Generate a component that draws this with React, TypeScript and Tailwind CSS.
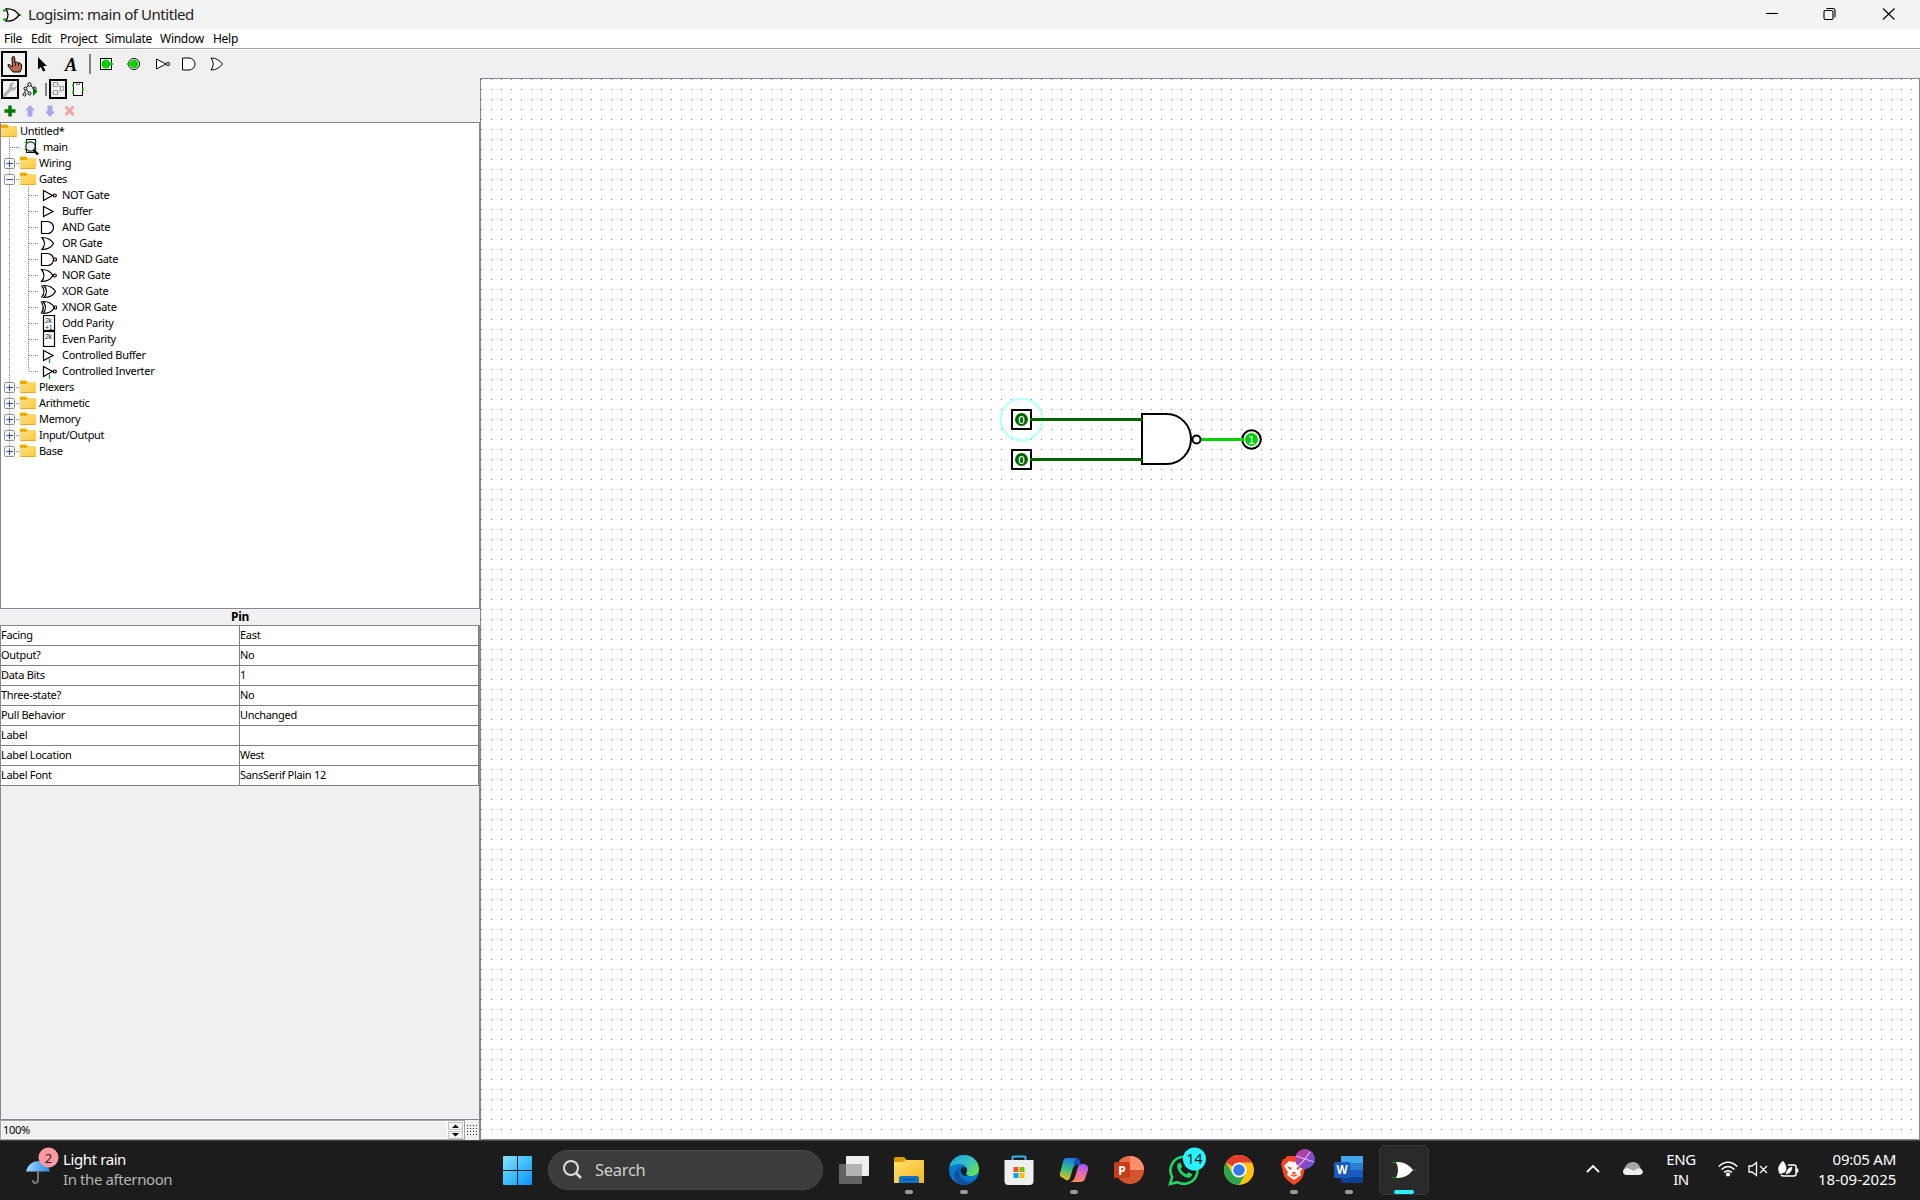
import type { ReactNode } from "react";

const ui = "font-['Noto_Sans','Open_Sans',sans-serif]";

type Shape = "not" | "buffer" | "and" | "or" | "nand" | "nor" | "xor" | "xnor" | "odd" | "even" | "cbuf" | "cinv";

function Gate({ shape }: { shape: Shape }) {
  const bubble = (x: number) => <circle cx={x} cy="8.5" r="1.5" />;
  const orBody = (x: number) => <path d={`M${x} 2.5 Q${x + 8} 2.5 ${x + 11.5} 8.5 Q${x + 8} 14.5 ${x} 14.5 Q${x + 5} 8.5 ${x} 2.5Z`} />;
  return (
    <svg width="18" height="16" viewBox="0 0 18 16" fill="none" stroke="#000" strokeWidth="1.2" className="shrink-0">
      {(shape === "not" || shape === "cinv") && <><path d="M4.5 3.5 V13.5 L13.5 8.5Z" />{bubble(15.8)}</>}
      {(shape === "buffer" || shape === "cbuf") && <path d="M4.5 3.5 V13.5 L14 8.5Z" />}
      {(shape === "cbuf" || shape === "cinv") && <path d="M10.5 11.5V16" stroke="#00a000" />}
      {(shape === "and" || shape === "nand") && <path d="M2.5 2.5 H8.5 A6 6 0 0 1 8.5 14.5 H2.5Z" />}
      {shape === "nand" && bubble(16)}
      {shape === "or" && orBody(3)}
      {shape === "nor" && <>{orBody(2.5)}{bubble(15.8)}</>}
      {shape === "xor" && <>{orBody(5)}<path d="M2.5 2.5Q7.5 8.5 2.5 14.5" /></>}
      {shape === "xnor" && <>{orBody(4)}<path d="M2 2.5Q6.5 8.5 2 14.5" />{bubble(16.3)}</>}
      {(shape === "odd" || shape === "even") && (
        <>
          <rect x="4.5" y=".5" width="11" height="15" />
          <text x="6" y="7.500" fontSize="7" stroke="none" fill="#222" fontFamily="Liberation Sans">2k</text>
          {shape === "odd" && <text x="6" y="14.500" fontSize="7" stroke="none" fill="#222" fontFamily="Liberation Sans">+1</text>}
        </>
      )}
    </svg>
  );
}

function Folder() {
  return (
    <svg width="16" height="16" viewBox="0 0 16 16" className="shrink-0">
      <path d="M0 2.5 Q0 1.5 1 1.5 H6 L8 3.5 V7 H0Z" fill="#f2a900" />
      <path d="M0 5 H6.5 L8.5 3 H15 Q16 3 16 4 V13 Q16 14 15 14 H1 Q0 14 0 13Z" fill="url(#folder)" />
      <path d="M.5 13.5H15.5" stroke="#e5a823" />
      <defs><linearGradient id="folder" x1="0" y1="0" x2="1" y2="1"><stop stopColor="#ffe08a" /><stop offset="1" stopColor="#fdc93c" /></linearGradient></defs>
    </svg>
  );
}

function MainIcon() {
  return (
    <svg width="19" height="16" viewBox="0 0 19 16" className="shrink-0" fill="none">
      <rect x="6.5" y=".5" width="9" height="13" stroke="#000" />
      <path d="M4.500 3.500h3M4.500 10.500h3M14.500 3.500h2M14.500 10.500h2" stroke="#00c800" strokeWidth="1.4" />
      <circle cx="10.500" cy="7.500" r="4.700" fill="#eef" stroke="#222" strokeWidth="1.200" />
      <path d="M13.500 11L18 15.500" stroke="#000" strokeWidth="2.400" />
    </svg>
  );
}

function Guide({ branch, last, box }: { branch?: boolean; last?: boolean; box?: "+" | "-" }) {
  return (
    <svg width="19" height="16" viewBox="0 0 19 16" className="shrink-0" fill="none">
      <path d={last ? "M8.5 0V8" : "M8.5 0V16"} stroke="#808080" strokeDasharray="1 1" />
      {branch && <path d="M9 8.5H19" stroke="#808080" strokeDasharray="1 1" />}
      {box && (
        <>
          <rect x="3.5" y="3.5" width="10" height="10" rx="1" fill="#f4f4f4" stroke="#919191" />
          <path d={box === "+" ? "M5.5 8.5H12M8.5 5.500V12" : "M5.5 8.5H12"} stroke="#3a50a0" />
        </>
      )}
    </svg>
  );
}

const gates: [string, Shape][] = [
  ["NOT Gate", "not"], ["Buffer", "buffer"], ["AND Gate", "and"], ["OR Gate", "or"],
  ["NAND Gate", "nand"], ["NOR Gate", "nor"], ["XOR Gate", "xor"], ["XNOR Gate", "xnor"],
  ["Odd Parity", "odd"], ["Even Parity", "even"], ["Controlled Buffer", "cbuf"], ["Controlled Inverter", "cinv"],
];

function Row({ children }: { children: ReactNode }) {
  return <div className="flex h-4 items-center whitespace-nowrap">{children}</div>;
}

function FolderRow({ name, box, last }: { name: string; box: "+" | "-"; last?: boolean }) {
  return <Row><Guide branch box={box} last={last} /><Folder /><span className="ml-[3px]">{name}</span></Row>;
}

function Tree() {
  return (
    <div className="h-[487px] border border-[#828790] bg-white text-[11px] leading-4 tracking-[-0.32px]">
      <Row><Folder /><span className="ml-[3px]">Untitled*</span></Row>
      <Row><Guide branch /><MainIcon /><span className="ml-[4px]">main</span></Row>
      <FolderRow name="Wiring" box="+" />
      <FolderRow name="Gates" box="-" />
      {gates.map(([name, shape], i) => (
        <Row key={name}>
          <Guide /><Guide branch last={i === gates.length - 1} /><Gate shape={shape} /><span className="ml-[5px]">{name}</span>
        </Row>
      ))}
      <FolderRow name="Plexers" box="+" />
      <FolderRow name="Arithmetic" box="+" />
      <FolderRow name="Memory" box="+" />
      <FolderRow name="Input/Output" box="+" />
      <FolderRow name="Base" box="+" last />
    </div>
  );
}

const attributes = [
  ["Facing", "East"], ["Output?", "No"], ["Data Bits", "1"], ["Three-state?", "No"], ["Pull Behavior", "Unchanged"],
  ["Label", ""], ["Label Location", "West"], ["Label Font", "SansSerif Plain 12"],
];

function Attributes() {
  return (
    <div className="flex flex-1 flex-col">
      <div className="flex h-4 items-center justify-center text-[12px] font-bold tracking-[-0.2px]">Pin</div>
      <div className="flex-1 border border-[#828790] text-[11px] tracking-[-0.3px]">
        {attributes.map(([k, v]) => (
          <div key={k} className="flex h-5 border-b border-r border-[#808080] bg-white leading-[18px]">
            <div className="w-[239px] border-r border-[#808080]">{k}</div>
            <div>{v}</div>
          </div>
        ))}
      </div>
    </div>
  );
}

function ZoomBar() {
  return (
    <div className="flex h-5">
      <div className="flex w-[465px] border border-[#a0a3a8] bg-white py-px pl-px">
        <div className="flex-1 bg-[#f0f0f0] pl-px text-[11px] leading-4 tracking-[-0.3px]">100%</div>
        <svg width="17" height="17" viewBox="0 0 17 17">
          <rect x="1.5" y=".5" width="14" height="7" fill="#f4f4f4" stroke="#c4c4c4" />
          <rect x="1.5" y="9.5" width="14" height="7" fill="#f4f4f4" stroke="#c4c4c4" />
          <path d="M5 6L8.500 2.500L12 6ZM5 11L8.500 14.500L12 11Z" fill="#000" />
        </svg>
      </div>
      <svg width="15" height="20" viewBox="0 0 15 20">
        {[5, 8, 11, 14].map((y) => <path key={y} d={`M2 ${y + 0.5}H13`} stroke="#222" strokeDasharray="1 2" />)}
        <path d="M14.500 0V20" stroke="#828790" />
      </svg>
    </div>
  );
}

function Toolbar() {
  return (
    <svg width="240" height="28" viewBox="0 50 240 28" fill="none" stroke="#000">
      <rect x="2" y="52" width="24" height="24" strokeWidth="2" />
      <path d="M12 58 Q12.500 56 14 56.500 Q15 57 15 63 L16.500 62 L18 63 L19.500 62.800 L21.500 64.500 V68.500 L20 72 H13 L8 66 Q7.500 64 9.500 64.500 L12.500 67Z" fill="#bb6b50" strokeWidth="1" />
      <path d="M15.500 63.500V66M18.500 63.500V66" strokeWidth=".8" />
      <path d="M38 57V69.500L41 67L43 71.500L45.500 70.500L43 66H47Z" fill="#000" stroke="none" />
      <text x="65" y="70.500" fontFamily="Liberation Serif" fontSize="18" fontStyle="italic" fontWeight="bold" fill="#000" stroke="none">A</text>
      <path d="M90 54V74" stroke="#808080" strokeWidth="2" />
      <rect x="100.500" y="58.500" width="11" height="11" fill="#fff" />
      <circle cx="106" cy="64" r="4.500" fill="#00d200" stroke="none" /><path d="M109 64H113" stroke="#00d200" strokeWidth="2" />
      <circle cx="134" cy="64" r="5.500" fill="#fff" /><circle cx="134" cy="64" r="4.200" fill="#00d200" stroke="none" /><path d="M127 64H130" stroke="#00d200" strokeWidth="2" />
      <path d="M156.500 59V69L166 64Z" fill="#fff" /><circle cx="168" cy="64" r="1.600" fill="#fff" />
      <path d="M182.500 58H189A6 6 0 0 1 189 70H182.500Z" fill="#fff" />
      <path d="M211 58Q218 58 222.500 64Q218 70 211 70Q215.500 64 211 58Z" fill="#fff" />
    </svg>
  );
}

function ExplorerBars() {
  return (
    <svg width="480" height="44" viewBox="0 78 480 44" fill="none" stroke="#000">
      <rect x="2" y="80" width="16" height="18" strokeWidth="2" />
      <path d="M4.500 95.500L11 88.500" stroke="#b0b0b0" strokeWidth="3.200" strokeLinecap="round" />
      <path d="M16.500 86L13.500 88L12 86L14.500 82.500Q9.500 82 9 86.500Q9 90.500 12.500 90.800Q16.500 90 16.500 86Z" fill="#b0b0b0" stroke="none" />
      <circle cx="29.500" cy="84.500" r="1.700" /><circle cx="25.500" cy="88.500" r="1.500" /><circle cx="34.500" cy="88.500" r="1.500" /><circle cx="24.500" cy="94.500" r="1.500" /><circle cx="29.500" cy="93.500" r="1.500" />
      <path d="M28 86L26.500 87.500M31 86L33 87.500M25 90.500V92.500M26.500 90L28.500 92" />
      <path d="M33 87L37.500 91.500L33 96Z" fill="#007800" stroke="none" />
      <path d="M46 83V96" stroke="#808080" strokeWidth="2" />
      <rect x="50" y="80" width="16" height="18" strokeWidth="2" />
      <g stroke="#a0a0a0"><rect x="53.500" y="82.500" width="4" height="4" /><rect x="53.500" y="90.500" width="4" height="4" /><rect x="60.500" y="86.500" width="3" height="4" /></g>
      <path d="M51 84.500H53M51 92.500H53M58 84.500H59.500V87.500M58 92.500H59.500V89.500" stroke="#90dd90" />
      <rect x="73.500" y="82.500" width="9" height="13" fill="#fff" /><path d="M76.500 83V84.500H79.500V83" stroke="#777" />
      <path d="M72 85.500H74M72 92.500H74M82 89.500H84" stroke="#00c800" strokeWidth="2" />
      <path d="M10 105.500V116.500M4.500 111H15.500" stroke="#007800" strokeWidth="3.500" />
      <path d="M30 105L35 110.500H32.500V116.500H27.500V110.500H25Z" fill="#a6a6ee" stroke="none" />
      <path d="M50 117L55 111.500H52.500V105.500H47.500V111.500H45Z" fill="#a6a6ee" stroke="none" />
      <path d="M65.500 106.500L73.500 115M73.500 106.500L65.500 115" stroke="#eea6a6" strokeWidth="3" />
    </svg>
  );
}

function Pin({ y }: { y: number }) {
  return (
    <g>
      <rect x="1012" y={y - 9.5} width="19" height="19" fill="#fff" stroke="#000" strokeWidth="2" />
      <circle cx="1021.500" cy={y} r="6.500" fill="#006400" />
      <text x="1021.500" y={y + 4} textAnchor="middle" fontFamily="DejaVu Sans" fontSize="11" fill="#fff">0</text>
    </g>
  );
}

function Canvas() {
  return (
    <div className="flex-1 border border-[#828790] bg-white">
      <svg className="block" width="1438" height="1060" viewBox="481 79 1438 1060" fill="none">
        <defs>
          <pattern id="grid" x="481" y="79" width="10" height="10" patternUnits="userSpaceOnUse"><rect width="1" height="1" fill="#808080" /></pattern>
        </defs>
        <rect x="481" y="79" width="1438" height="1060" fill="url(#grid)" />
        <circle cx="1021.500" cy="419.500" r="20.800" stroke="#bfffff" strokeWidth="2.600" />
        <Pin y={419.5} /><Pin y={459.5} />
        <path d="M1030 419.500H1142M1030 459.500H1142" stroke="#006400" strokeWidth="3" />
        <path d="M1167 414H1142V464H1167A24 25 0 0 0 1167 414Z" fill="#fff" stroke="#000" strokeWidth="2" />
        <path d="M1140 419.500H1142.500M1140 459.500H1142.500" stroke="#006400" strokeWidth="3" />
        <path d="M1200 439.500H1243" stroke="#00d200" strokeWidth="3" />
        <circle cx="1196.500" cy="439.500" r="4" fill="#fff" stroke="#000" strokeWidth="2" />
        <circle cx="1251.500" cy="439.500" r="9.300" fill="#fff" stroke="#000" strokeWidth="2" />
        <circle cx="1251.500" cy="439.500" r="6.500" fill="#00d200" />
        <path d="M1240 439.500H1244" stroke="#00d200" strokeWidth="3" />
        <text x="1251.500" y="443.500" textAnchor="middle" fontFamily="DejaVu Sans" fontSize="11" fill="#fff">1</text>
      </svg>
    </div>
  );
}

function Slot({ children, running, active }: { children: ReactNode; running?: boolean; active?: boolean }) {
  return (
    <div className="flex w-[55px] justify-center">
      <div className={active ? "relative flex size-[50px] items-center justify-center rounded-md border border-[#363636] bg-[#2a2a2a]" : "relative flex size-[50px] items-center justify-center"}>
        {children}
        {running && <span className="absolute bottom-px h-1 w-2 rounded-full bg-[#9a9a9a]" />}
        {active && <span className="absolute bottom-0 h-1 w-5 rounded-full bg-[#2af0ff]" />}
      </div>
    </div>
  );
}

function Svg({ children }: { children: ReactNode }) {
  return <svg width="32" height="32" viewBox="0 0 32 32" fill="none" className="overflow-visible">{children}</svg>;
}

function Taskbar() {
  return (
    <div className={"flex h-[60px] border-t border-[#4a4a4e] bg-[#1c1c1c] text-white " + ui}>
      <div className="flex w-[490px] items-center pl-[25px]">
        <svg className="mb-[11px]" width="35" height="38" viewBox="25 1146 35 38" fill="none">
          <path d="M26 1171.500Q28 1162 38 1161Q48 1162 50 1171.500Z" fill="url(#umbrella)" />
          <path d="M38 1171V1180Q38 1183 35 1183Q33 1183 33 1180" stroke="#777" strokeWidth="2" />
          <circle cx="48.500" cy="1157.500" r="10" fill="#ff9aa2" />
          <text x="48.500" y="1162.500" textAnchor="middle" fontSize="13" fill="#222">2</text>
          <defs><linearGradient id="umbrella"><stop stopColor="#a8d8ff" /><stop offset="1" stopColor="#1e88e5" /></linearGradient></defs>
        </svg>
        <div className="mb-1 ml-[3px] text-[15px] leading-5 tracking-[-0.4px]"><div>Light rain</div><div className="text-[#b4b4b4]">In the afternoon</div></div>
      </div>
      <div className="mb-px flex items-center">
        <div className="flex w-[58px] justify-center pr-[3px]">
          <svg width="29" height="29" viewBox="0 0 29 29"><path d="M0 1Q0 0 1 0H14V14H0ZM15 0H28Q29 0 29 1V14H15ZM0 15H14V29H1Q0 29 0 28ZM15 15H29V28Q29 29 28 29H15Z" fill="url(#win)" /><defs><linearGradient id="win" x1="0" y1="0" x2="1" y2="1"><stop stopColor="#8fe0ff" /><stop offset=".5" stopColor="#3cc0fb" /><stop offset="1" stopColor="#0a90fa" /></linearGradient></defs></svg>
        </div>
        <div className="mr-[3px] flex h-10 w-[275px] items-center rounded-full border border-[#484848] bg-[#3c3c3c] pl-[14px]">
          <svg width="20" height="20" viewBox="0 0 20 20" fill="none" stroke="#ddd" strokeWidth="2"><circle cx="8" cy="8" r="7" /><path d="M13 13L18 18" strokeWidth="2.500" /></svg>
          <span className="ml-3 mt-px text-[16.5px] tracking-[-0.3px] text-[#cfcfcf]">Search</span>
        </div>
        <Slot><Svg><rect x="1" y="10" width="23" height="20" rx="1" fill="#636363" /><rect x="8" y="2" width="23" height="20" rx="1" fill="#eee" /><path d="M8 10H24V22H8Z" fill="#b4b4b4" /></Svg></Slot>
        <Slot running><Svg><path d="M1 5Q1 3 3 3H11L14 6V12H1Z" fill="#dc9b00" /><path d="M1 8H10L13 6H30Q31 6 31 7V29H1Z" fill="url(#exp)" /><path d="M6 29V24Q6 22 8 22H24Q26 22 26 24V29Z" fill="#1170c4" /><path d="M10 25.500H22" stroke="#074a8f" /><defs><linearGradient id="exp" x1="0" y1="0" x2="1" y2="1"><stop stopColor="#ffe176" /><stop offset="1" stopColor="#f8b51c" /></linearGradient></defs></Svg></Slot>
        <Slot running><Svg>
          <circle cx="16" cy="16" r="15" fill="#0878cf" />
          <path d="M2 10Q7 1 16 1C25 1 31 8 31 15C31 20 27 22 23 22C19 22 18 20 19 18C21 11 12 7 2 13Z" fill="url(#edge)" />
          <path d="M11 16Q11 24 18 27Q24 29 29 24Q24 31 16 31Q8 31 6 23Q6 17 12 13Z" fill="#134f9f" />
          <path d="M14 13C10 18 15 23 20 22C17 21 18 19 19 17Q19 12 14 13Z" fill="#17202a" />
          <defs><linearGradient id="edge" x1="0" y1="0" x2="1" y2=".7"><stop stopColor="#1aa0e0" /><stop offset=".6" stopColor="#35c4c0" /><stop offset="1" stopColor="#6be04d" /></linearGradient></defs>
        </Svg></Slot>
        <Slot><Svg><path d="M9.500 8V3.500Q9.500 2.500 10.500 2.500H21.500Q22.500 2.500 22.500 3.500V8" stroke="#35b5f0" strokeWidth="2" /><path d="M1.500 6H30.500V27Q30.500 31 26.500 31H5.500Q1.500 31 1.500 27Z" fill="#efefef" /><path d="M10.500 13H15.500V18H10.500Z" fill="#f25022" /><path d="M16.500 13H21.500V18H16.500Z" fill="#7fba00" /><path d="M10.500 19H15.500V24H10.500Z" fill="#00a4ef" /><path d="M16.500 19H21.500V24H16.500Z" fill="#ffb900" /></Svg></Slot>
        <Slot running><Svg>
          <path d="M8 4H18Q21 4 22 8L23 11H18Q16 11 15 14L12 24Q11 27 8 26L5 24Q1 23 2 19L5 8Q6 4 8 4Z" fill="url(#cop1)" />
          <path d="M24 10H26Q31 11 30 16L27 25Q26 28 22 28H12Q16 27 17 23L20 13Q21 10 24 10Z" fill="url(#cop2)" />
          <path d="M18 4Q21 4 22 8L23 11H18Q15 11 16 8Z" fill="#194eb5" />
          <defs><linearGradient id="cop1" x1=".5" y1="0" x2=".3" y2="1"><stop stopColor="#1679e8" /><stop offset=".5" stopColor="#35bd86" /><stop offset="1" stopColor="#f4bd18" /></linearGradient><linearGradient id="cop2" x1=".6" y1="0" x2=".3" y2="1"><stop stopColor="#a658f5" /><stop offset=".55" stopColor="#f06baa" /><stop offset="1" stopColor="#ff8b48" /></linearGradient></defs>
        </Svg></Slot>
        <Slot><Svg><circle cx="17" cy="16" r="14" fill="#d35230" /><path d="M17 2A14 14 0 0 1 31 16H17Z" fill="#ff8f6b" /><path d="M17 2A14 14 0 0 0 3 16H17Z" fill="#ed6c47" /><rect x="1" y="8" width="16" height="16" rx="1.500" fill="#c43e1c" /><text x="9" y="20.500" textAnchor="middle" fontSize="12" fontWeight="bold" fill="#fff">P</text></Svg></Slot>
        <Slot><Svg><path d="M2 30L4.200 23A13.500 13.500 0 1 1 9.500 28.200Z" stroke="#25d366" strokeWidth="2.600" /><path d="M10 9.500Q12 8 13 10L14 12.500Q14 13.500 12.500 15Q14.500 19 18.500 20.500L20 18.500Q21 18 24 20Q25 21 22 23.500Q18 25 12.500 19.500Q7.500 14 10 9.500Z" fill="#25d366" /><circle cx="26.500" cy="5" r="11.500" fill="#26f3ff" /><text x="26.500" y="10" textAnchor="middle" fontSize="14" fill="#111">14</text></Svg></Slot>
        <Slot><Svg><circle cx="16" cy="16" r="15" fill="#fbc116" /><path d="M16 16L3 8.500A15 15 0 0 1 29 8.500H16Z" fill="#e33b2e" /><path d="M3 8.500A15 15 0 0 0 16 31L22.500 19.500L16 16L9.500 19.500Z" fill="#2da44e" /><circle cx="16" cy="16" r="7.500" fill="#fff" /><circle cx="16" cy="16" r="5.800" fill="#2f7bea" /></Svg></Slot>
        <Slot running><Svg><path d="M9 2H21L24 5H27L28 10L25 22Q24 26 16 31Q8 26 6 22L3 10L5 5H7Z" fill="#fb4420" /><path d="M11 7L16 8L21 7L26 12L22 18L23 21L16 26L9 21L10 18L6 12Z" fill="#fff" /><path d="M9 12L14 14L12 16ZM23 12L18 14L20 16ZM14 18L16 22L18 18M12 21L16 20L20 21L16 23Z" fill="#fb4420" /><circle cx="27" cy="5" r="10" fill="url(#orb)" /><path d="M18 2L36 8M20 12Q26 7 32-2" stroke="#ecb4eb" strokeWidth="1.300" /><defs><linearGradient id="orb" x1="0" y1="0" x2="1" y2="1"><stop stopColor="#cf3995" /><stop offset="1" stopColor="#5b55e4" /></linearGradient></defs></Svg></Slot>
        <Slot running><Svg><path d="M8 2H30V9H8Z" fill="#41a5ee" /><path d="M8 9H30V16H8Z" fill="#2b7cd3" /><path d="M8 16H30V23H8Z" fill="#185abd" /><path d="M8 23H30V29H8Z" fill="#103f91" /><rect x="1" y="8" width="16" height="16" rx="1.500" fill="#185abd" /><text x="9" y="20" textAnchor="middle" fontSize="11.500" fontWeight="bold" fill="#fff">W</text></Svg></Slot>
        <Slot active><Svg><path d="M4 8.500H9M4 23.500H9M25 16H28" stroke="#087a08" strokeWidth="1.500" /><path d="M8 8Q18 7 25 16Q18 25 8 24Q12 16 8 8Z" fill="#fff" /></Svg></Slot>
      </div>
      <div className="mb-[3px] ml-auto flex items-center">
        <svg width="14" height="8" viewBox="0 0 14 8" fill="none" stroke="#fff" strokeWidth="1.800"><path d="M1 7L7 1L13 7" /></svg>
        <svg className="ml-[23px]" width="20" height="14" viewBox="0 0 20 14"><path d="M1 8Q3 0 10 0Q15 0 17 5L19 9H1Z" fill="#a6a6a6" /><path d="M4 13Q0 13 0 9.500Q0 6 5 6L11 9Q14 5 18 7Q20 9 20 10Q19 13 16 13Z" fill="#eee" /></svg>
        <div className="ml-[22px] w-8 text-center text-[15px] leading-5 tracking-[-0.4px]">ENG<br />IN</div>
        <svg className="ml-[21px]" width="20" height="16" viewBox="0 0 20 16" fill="none" stroke="#fff" strokeWidth="1.600"><path d="M.7 5.500Q10-3 19.300 5.500M3.500 8.500Q10 2.500 16.500 8.500M6 11.500Q10 8 14 11.500" /><circle cx="10" cy="13.500" r="1.300" fill="#fff" /></svg>
        <svg className="ml-[10px]" width="20" height="16" viewBox="0 0 20 16" fill="none" stroke="#fff" strokeWidth="1.300"><path d="M1 5H4L8.500 1.500V14.500L4 11H1ZM12 5L19 12M19 5L12 12" /></svg>
        <svg className="ml-[10px]" width="21" height="18" viewBox="0 0 21 18" fill="none" stroke="#fff" strokeWidth="1.500"><path d="M10 5H16Q18 5 18 7V14Q18 16 16 16H6Q4 16 3 15M19.500 8.500V12.500" /><path d="M1 12Q-1 6 5 1Q10 7 7 12L2 14Z" fill="#fff" strokeWidth=".5" /><path d="M8 14Q14 13 14 7Q9 8 8 14Z" fill="#fff" strokeWidth=".5" /></svg>
        <div className="ml-[19px] mr-[24px] w-[78px] text-right text-[15px] leading-5 tracking-[-0.25px] whitespace-nowrap">09:05 AM<br /><span className="tracking-[0px]">18-09-2025</span></div>
      </div>
    </div>
  );
}

export default function App() {
  return (
    <div className={"flex h-[1200px] w-[1920px] flex-col overflow-hidden bg-[#f0f0f0] text-black " + ui}>
      <div className="flex h-[29px] items-center bg-[#f3f3f3]">
        <svg width="22" height="20" viewBox="0 4 22 20" fill="none" stroke="#000" strokeWidth="1.300"><path d="M3 9.500H7M3 18.500H7M18 14H21" stroke="#00b400" strokeWidth="2" /><path d="M6 8Q14 7 19 14Q14 21 6 20Q10 14 6 8Z" fill="#fff" /></svg>
        <span className="ml-[6px] text-[15px] tracking-[-0.45px] text-[#222]">Logisim: main of Untitled</span>
        <svg className="mb-px ml-auto mr-[24px]" width="131" height="14" viewBox="0 0 131 14" fill="none" stroke="#000" strokeWidth="1.100"><path d="M1 6.500H13" /><rect x="59" y="3.500" width="9" height="9" rx="1.500" /><path d="M61.500 1.500H68Q70 1.500 70 3.500V10.500" /><path d="M118 1.500L129.500 12.500M129.500 1.500L118 12.500" /></svg>
      </div>
      <div className="flex h-5 items-center border-b border-[#a0a0a0] bg-white pl-1 text-[12px] leading-[18px] tracking-[-0.27px]">
        <span className="w-[27px]">File</span><span className="w-[29px]">Edit</span><span className="w-[45px]">Project</span><span className="w-[55px]">Simulate</span><span className="w-[53px]">Window</span><span>Help</span>
      </div>
      <div className="h-[29px] border-t border-white"><Toolbar /></div>
      <div className="flex h-[1062px]">
        <div className="flex w-[480px] flex-col">
          <div className="h-[44px]"><ExplorerBars /></div>
          <Tree />
          <Attributes />
          <ZoomBar />
        </div>
        <Canvas />
      </div>
      <Taskbar />
    </div>
  );
}
